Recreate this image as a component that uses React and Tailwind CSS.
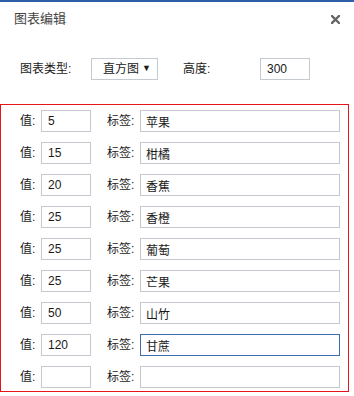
const rows = [
  { value: '5', label: '苹果' },
  { value: '15', label: '柑橘' },
  { value: '20', label: '香蕉' },
  { value: '25', label: '香橙' },
  { value: '25', label: '葡萄' },
  { value: '25', label: '芒果' },
  { value: '50', label: '山竹' },
  { value: '120', label: '甘蔗', active: true },
  { value: '', label: '' },
];

const font = { fontFamily: '"Liberation Sans", "Noto Sans CJK SC", sans-serif' };

export default function App() {
  return (
    <div
      className="w-[354px] h-[396px] bg-white border-t-2 border-[#2d5ea8] text-[12px] text-[#1a1a1a] overflow-hidden"
      style={font}
    >
      {/* header */}
      <div className="flex items-center justify-between h-[34px] pl-[14px] pr-[14px]">
        <span className="text-[13px] text-[#444]">图表编辑</span>
        <svg width="9" height="9" viewBox="0 0 9 9" className="mt-[1px]">
          <path d="M1 1 L8 8 M8 1 L1 8" stroke="#666" strokeWidth="2.4" strokeLinecap="square" />
        </svg>
      </div>

      {/* chart config */}
      <div className="flex items-center mt-[22px] pl-[20px] h-[22px]">
        <span className="w-[71px]">图表类型:</span>
        <div className="flex items-center justify-between w-[67px] h-[22px] border border-[#c5cad0] pl-[11px] pr-[6px]">
          <span>直方图</span>
          <span className="text-[9px]">▼</span>
        </div>
        <span className="ml-[25px] w-[77px]">高度:</span>
        <input
          className="w-[50px] h-[22px] border border-[#c5cad0] px-[6px] outline-none"
          defaultValue="300"
        />
      </div>

      {/* data rows */}
      <div className="mt-[24px] w-[349px] border border-[#e8141c] pt-[5px] pb-[3px] flex flex-col gap-[10px]">
        {rows.map((row, i) => (
          <div key={i} className="flex items-center h-[22px] pl-[19px]">
            <span className="w-[21px]">值:</span>
            <input
              className="w-[50px] h-[22px] border border-[#c5cad0] px-[6px] outline-none"
              defaultValue={row.value}
            />
            <span className="ml-[16px] w-[33px]">标签:</span>
            <input
              className={
                row.active
                  ? 'w-[200px] h-[22px] border border-[#3c6db5] px-[5px] outline-none'
                  : 'w-[200px] h-[22px] border border-[#c5cad0] px-[5px] outline-none'
              }
              defaultValue={row.label}
            />
          </div>
        ))}
      </div>
    </div>
  );
}
